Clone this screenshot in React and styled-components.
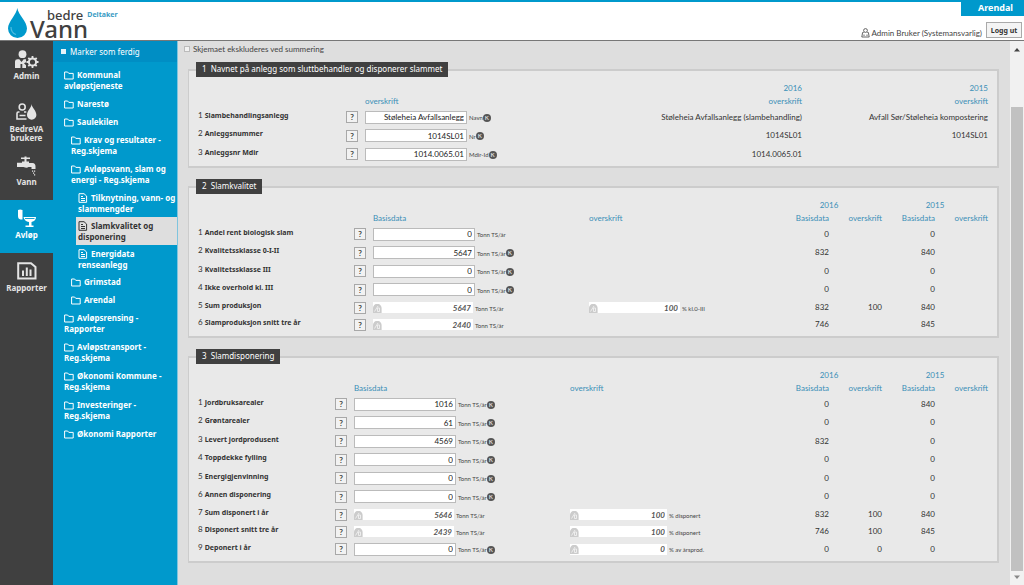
import React from 'react';
import styled, { createGlobalStyle } from 'styled-components';

const blue = '#0099cc';
const dark = '#404040';
const linkBlue = '#3a8fb7';
const heading = '"Noto Sans", "Open Sans", sans-serif';
const body = 'Lato, "Open Sans", sans-serif';

const GlobalStyle = createGlobalStyle`
    * {
        box-sizing: border-box;
    }
    body {
        margin: 0;
        background: #dedede;
        color: #333;
        font-family: ${body};
        font-size: 8px;
    }
    button, input {
        font-family: inherit;
    }
`

const Page = styled.div`
    display: flex;
    flex-direction: column;
    min-height: 100vh;
`

const Header = styled.header`
    display: flex;
    justify-content: space-between;
    height: 41px;
    background: #fff;
    border-top: 2px solid ${blue};
    border-bottom: 1px solid #777;
`

const Brand = styled.a`
    display: flex;
    padding: 6px 0 0 8px;
    color: ${dark};
    font-family: ${heading};
    text-decoration: none;
`

const BrandText = styled.span`
    display: grid;
    grid-template-rows: 12px 18px;
    margin-left: 3px;
`

const BrandTop = styled.span`
    display: flex;
    gap: 4px;
    margin-left: 17px;
    font-size: 13px;
    font-weight: 500;
    line-height: 14px;
`

const Role = styled.span`
    color: #3a9cc4;
    font-size: 7px;
    font-weight: bold;
`

const BrandName = styled.span`
    font-size: 24px;
    font-weight: 500;
    line-height: 18px;
`

const Account = styled.div`
    display: flex;
    flex-direction: column;
    align-items: flex-end;
`

const Owner = styled.div`
    width: 63px;
    height: 14px;
    padding-right: 11px;
    background: ${blue};
    color: #fff;
    font-family: ${heading};
    font-size: 9px;
    font-weight: bold;
    line-height: 11px;
    text-align: right;
`

const UserRow = styled.div`
    display: flex;
    align-items: center;
    gap: 4px;
    padding: 6px 2px 0 0;
`

const UserName = styled.span`
    display: flex;
    align-items: center;
    gap: 2px;
    padding-top: 5px;
    color: #444;
`

const LogoutButton = styled.button`
    width: 36px;
    height: 16px;
    padding: 0;
    background: #f4f4f4;
    border: 1px solid #aaa;
    color: #333;
    font-family: ${heading};
    font-size: 7px;
    font-weight: bold;
`

const Main = styled.div`
    display: flex;
    flex: 1;
`

const Modules = styled.nav`
    display: flex;
    flex-direction: column;
    flex: 0 0 53px;
    background: ${dark};
`

const ModuleLink = styled.a`
    display: flex;
    flex-direction: column;
    align-items: center;
    min-height: 53px;
    padding-top: 9px;
    background: ${props => props.$active ? blue : 'transparent'};
    color: ${props => props.$active ? '#fff' : '#e4e4e4'};
    font-family: ${heading};
    font-size: 8px;
    font-weight: bold;
    line-height: 9px;
    text-align: center;
    text-decoration: none;
`

const IconSlot = styled.span`
    height: 21px;
`

const Tree = styled.nav`
    flex: 0 0 125px;
    background: ${blue};
    border-right: 1px solid #7fc4de;
    color: #fff;
    font-family: ${heading};
`

const MarkDone = styled.label`
    display: flex;
    align-items: center;
    gap: 4px;
    height: 21px;
    margin-bottom: 4px;
    padding-left: 8px;
    background: #008ec4;
    font-size: 8px;

    input {
        appearance: none;
        width: 5px;
        height: 5px;
        margin: 0;
        background: #e6f3f9;
    }
`

const TreeList = styled.ul`
    margin: 0;
    padding: 0;
    list-style: none;
`

const TreeItem = styled.li`
    margin-left: ${props => props.$depth * 7 + (props.$depth === 2 ? 9 : 11)}px;
    padding: 3px 0 ${props => props.$depth === 2 ? 3 : 4}px ${props => props.$depth === 2 ? 2 : 0}px;
    background: ${props => props.$active ? '#dedede' : 'transparent'};
    color: ${props => props.$active ? '#333' : '#fff'};

    a {
        display: block;
        color: inherit;
        font-size: 8px;
        font-weight: bold;
        line-height: 11px;
        text-decoration: none;
    }

    svg {
        margin-right: 3px;
        vertical-align: -2px;
    }
`

const Content = styled.main`
    flex: 1;
    min-width: 0;
    padding: 3px 11px 0 10px;
`

const Exclude = styled.label`
    display: flex;
    align-items: center;
    gap: 3px;
    height: 10px;
    margin: 0 0 8px -4px;
    color: #444;

    input {
        appearance: none;
        width: 6px;
        height: 6px;
        margin: 0;
        background: #f2f2f2;
        border: 1px solid #bbb;
    }
`

const Section = styled.fieldset`
    min-width: 0;
    margin: 0 0 11px;
    padding: 5px 9px 3px 7px;
    background: #e9e9e9;
    border: 2px solid #ccc;
    border-left-width: 1px;
`

const Legend = styled.legend`
    height: 15px;
    padding: 0 6px;
    background: ${dark};
    color: #fff;
    font-family: ${heading};
    font-size: 8px;
    line-height: 14px;
    white-space: pre;
`

const Table = styled.table`
    width: 100%;
    border-collapse: collapse;
    table-layout: fixed;
    white-space: nowrap;
`

const HeadCell = styled.th`
    height: 13px;
    padding: 0;
    color: ${linkBlue};
    font-weight: normal;
    line-height: 13px;
    text-align: ${props => props.$align || 'left'};
`

const Row = styled.tr`
    height: ${props => props.$tall ? 19 : props.$calculated ? 17 : 18}px;
`

const Cell = styled.td`
    padding: 0;
    line-height: 11px;
    text-align: ${props => props.$align || 'left'};
`

const LabelCell = styled.th`
    padding: 0 0 4px 2px;
    font-weight: normal;
    line-height: 11px;
    text-align: left;

    label {
        font-family: ${heading};
        font-size: 7px;
        font-weight: bold;
    }
`

const HelpButton = styled.button`
    display: block;
    width: 12px;
    height: 12px;
    padding: 0;
    background: #f2f2f2;
    border: 1px solid #a8a8a8;
    color: #444;
    font-size: 8px;
    font-weight: bold;
    line-height: 10px;
`

const Field = styled.span`
    display: flex;
    position: relative;
    align-items: center;
    gap: 2px;
`

const ValueInput = styled.input`
    width: 102px;
    height: 13px;
    padding: 0 2px;
    background: #fff;
    border: 1px solid #bbb;
    color: #222;
    font-size: 8px;
    text-align: right;
`

const CalculatedInput = styled(ValueInput)`
    width: ${props => props.$width || 100}px;
    height: 11px;
    border: 0;
    color: #555;
    font-style: italic;
    font-weight: bold;
`

const CalcMark = styled.svg`
    position: absolute;
    top: 2px;
    left: 0;
`

const Unit = styled.span`
    display: flex;
    align-items: center;
    padding-top: 1px;
    color: #444;
    font-size: 6px;
`

const Comment = styled.button`
    width: 8px;
    height: 8px;
    padding: 0;
    background: #555;
    border: 0;
    border-radius: 50%;
    color: #ddd;
    font-size: 6px;
    font-weight: bold;
    line-height: 8px;
`

const ScrollTrack = styled.div`
    display: flex;
    flex-direction: column;
    flex: 0 0 14px;
    align-items: center;
    justify-content: space-between;
    padding: 6px 0 5px;
    background: #f1f1f1;
`

const ScrollThumb = styled.div`
    flex: 1;
    width: 12px;
    margin: 55px 0 4px;
    background: #c1c1c1;
`

const Folder = () => (
    <svg width="10" height="9" viewBox="0 0 10 9" fill="none" stroke="currentColor">
        <path d="M.6 8V1h3l1.2 1.4h4.4V8z" />
    </svg>
)

const Doc = () => (
    <svg width="10" height="10" viewBox="0 0 10 10" fill="none" stroke="currentColor">
        <path d="M1 .7h5L8.6 3v6.3H1zM3 3.500h2M3 5.500h4M3 7.500h4" />
    </svg>
)

const Drop = () => (
    <svg width="19" height="30" viewBox="0 0 19 30">
        <path d="M9.2 0C9 6 0 13.500 0 20.500a9.500 9.500 0 0 0 19 0C19 13.500 10.500 7 9.200 0z" fill={blue} />
        <path d="M3 19c0 4 2 6.500 5 7.500" fill="none" stroke="#4dbbe0" strokeWidth="1.200" />
    </svg>
)

const UserIcon = () => (
    <svg width="9" height="10" viewBox="0 0 9 10" fill="none" stroke="#555" strokeWidth="0.900">
        <circle cx="4.500" cy="2.500" r="1.900" />
        <path d="M2.700 4.500H1.600L.8 9h7.400l-.8-4.500H6.300M3 6.500v1.500M6 6.500v1.500" />
    </svg>
)

const AdminIcon = () => (
    <svg width="25" height="19" viewBox="0 0 25 19" fill="currentColor">
        <circle cx="8.500" cy="4.200" r="3.900" />
        <path d="M1 18V11.500Q1 9.200 3.500 9.200h1.800L7.500 12l2.200-2.800H12v3l-2 1 2 2V18H8.300v-4H6.500v4z" />
        <circle cx="18.500" cy="12" r="3.600" fill="none" stroke="currentColor" strokeWidth="2" />
        <path d="M18.500 6v2.500M18.500 15.500v2.500M12.500 12H15M22 12h2.500M14.300 7.800l1.700 1.700M21 14.500l1.700 1.700M14.300 16.200l1.700-1.700M21 9.500l1.700-1.700" stroke="currentColor" strokeWidth="1.800" />
    </svg>
)

const UsersIcon = () => (
    <svg width="21" height="18" viewBox="0 0 21 18" fill="none" stroke="currentColor" strokeWidth="1.600">
        <circle cx="6.200" cy="4" r="3" />
        <path d="M3.500 9H2.300Q1 9 1 10.500V16h9.500M8 9h2.300M3.500 12.500h6" />
        <path d="M15.500 1c0 4-4.500 6.500-4.500 11a4.700 4.700 0 0 0 9.400 0c0-4.500-4.400-7-4.900-11z" fill="currentColor" stroke="none" />
    </svg>
)

const TapIcon = () => (
    <svg width="21" height="20" viewBox="0 0 21 20" fill="currentColor">
        <path d="M5 1.500h3.500V.5h2v1h3.500V3h-3.500v2.500H13V7h3.500q3 0 3 3.500V13h-4v-2h-3q-1.500 1.500-5 0H1V6.800h5V5.500h2.500V3H5z" />
        <path d="M16 14.500h1.200v1.200H16zM18 14.500h1.200v1.200H18zM17 16.500h1.200v1.200H17zM18 18.300h1.200v1.200H18z" />
    </svg>
)

const ToiletIcon = () => (
    <svg width="20" height="19" viewBox="0 0 20 19" fill="currentColor">
        <path d="M1 1q2-1 4.500 0v9.500H3.500Q1 10 1 7zM6.500 8H19q0 4-4.500 5v3.500h2V18H8.500v-1.500H12V13Q7.500 12.500 6.500 8z" />
        <path d="M8 9.500h9.500" stroke={blue} strokeWidth="0.900" />
    </svg>
)

const ReportIcon = () => (
    <svg width="20" height="18" viewBox="0 0 20 18" fill="none" stroke="currentColor" strokeWidth="2">
        <path d="M1.200 1.200H14L18.500 5v11.500H1.200z" />
        <path d="M6 14V8.500M9.800 14V5.500M13.500 14V7.500" />
    </svg>
)

const modules = [
    { name: 'Admin', icon: <AdminIcon /> },
    { name: 'BedreVA brukere', icon: <UsersIcon /> },
    { name: 'Vann', icon: <TapIcon /> },
    { name: 'Avløp', icon: <ToiletIcon />, active: true },
    { name: 'Rapporter', icon: <ReportIcon /> },
]

const tree = [
    { depth: 0, text: 'Kommunal avløpstjeneste' },
    { depth: 0, text: 'Narestø' },
    { depth: 0, text: 'Saulekilen' },
    { depth: 1, text: 'Krav og resultater - Reg.skjema' },
    { depth: 1, text: 'Avløpsvann, slam og energi - Reg.skjema' },
    { depth: 2, text: 'Tilknytning, vann- og slammengder' },
    { depth: 2, text: 'Slamkvalitet og disponering', active: true },
    { depth: 2, text: 'Energidata renseanlegg' },
    { depth: 1, text: 'Grimstad' },
    { depth: 1, text: 'Arendal' },
    { depth: 0, text: 'Avløpsrensing - Rapporter' },
    { depth: 0, text: 'Avløpstransport - Reg.skjema' },
    { depth: 0, text: 'Økonomi Kommune - Reg.skjema' },
    { depth: 0, text: 'Investeringer - Reg.skjema' },
    { depth: 0, text: 'Økonomi Rapporter' },
]

const ton = 'Tonn TS/år'

const plants = [
    { label: 'Slambehandlingsanlegg', value: 'Støleheia Avfallsanlegg', unit: 'Navn', k: true, history: ['Støleheia Avfallsanlegg (slambehandling)', 'Avfall Sør/Støleheia kompostering'] },
    { label: 'Anleggsnummer', value: '1014SL01', unit: 'Nr', k: true, history: ['1014SL01', '1014SL01'] },
    { label: 'Anleggsnr Mdir', value: '1014.0065.01', unit: 'Mdir-Id', k: true, history: ['1014.0065.01', ''] },
]

const quality = [
    { label: 'Andel rent biologisk slam', value: '0', history: ['0', '', '0', ''] },
    { label: 'Kvalitetssklasse 0-I-II', value: '5647', k: true, history: ['832', '', '840', ''] },
    { label: 'Kvalitetssklasse III', value: '0', k: true, history: ['0', '', '0', ''] },
    { label: 'Ikke overhold kl. III', value: '0', k: true, history: ['0', '', '0', ''] },
    { label: 'Sum produksjon', value: '5647', calculated: true, share: '100', shareUnit: '% kl.0-III', history: ['832', '100', '840', ''] },
    { label: 'Slamproduksjon snitt tre år', value: '2440', calculated: true, history: ['746', '', '845', ''] },
]

const disposal = [
    { label: 'Jordbruksarealer', value: '1016', k: true, history: ['0', '', '840', ''] },
    { label: 'Grøntarealer', value: '61', k: true, history: ['0', '', '0', ''] },
    { label: 'Levert jordprodusent', value: '4569', k: true, history: ['832', '', '0', ''] },
    { label: 'Toppdekke fylling', value: '0', k: true, history: ['0', '', '0', ''] },
    { label: 'Energigjenvinning', value: '0', k: true, history: ['0', '', '0', ''] },
    { label: 'Annen disponering', value: '0', k: true, history: ['0', '', '0', ''] },
    { label: 'Sum disponert i år', value: '5646', calculated: true, share: '100', shareUnit: '% disponert', history: ['832', '100', '840', ''] },
    { label: 'Disponert snitt tre år', value: '2439', calculated: true, share: '100', shareUnit: '% disponert', history: ['746', '100', '845', ''] },
    { label: 'Deponert i år', value: '0', k: true, share: '0', shareUnit: '% av årsprod.', history: ['0', '0', '0', ''] },
]

const Calculated = ({ id, label, value, unit, width }) => (
    <Field>
        <CalculatedInput id={id} aria-label={label} defaultValue={value} readOnly $width={width} />
        <CalcMark width="9" height="9" viewBox="0 0 9 9">
            <path d="M0 9V4a4.300 4.300 0 0 1 8.600 0v5z" fill="#ccc" />
            <path d="M1.500 7.500L5 2M4.500 4h2v3.500h-2z" fill="none" stroke="#f5f5f5" strokeWidth="0.800" />
        </CalcMark>
        <Unit>{unit}</Unit>
    </Field>
)

const FormRow = ({ id, number, row, withShare, shareWidth }) => (
    <Row $tall={number % 2 === 0 && !row.calculated} $calculated={row.calculated}>
        <LabelCell scope="row">{number} <label htmlFor={id}>{row.label}</label></LabelCell>
        <Cell><HelpButton type="button" aria-label={'Hjelp ' + row.label}>?</HelpButton></Cell>
        <Cell>
            {row.calculated ? (
                <Calculated id={id} value={row.value} unit={ton} />
            ) : (
                <Field>
                    <ValueInput id={id} defaultValue={row.value} />
                    <Unit>
                        {row.unit || ton}
                        {row.k && <Comment type="button">K</Comment>}
                    </Unit>
                </Field>
            )}
        </Cell>
        {withShare && (
            <Cell>
                {row.share && <Calculated label={row.label + ' %'} value={row.share} unit={row.shareUnit} width={shareWidth} />}
            </Cell>
        )}
        {row.history.map((value, i) => <Cell key={i} $align="right">{value}</Cell>)}
    </Row>
)

const NameSection = () => (
    <Section>
        <Legend>1  Navnet på anlegg som sluttbehandler og disponerer slammet</Legend>
        <Table>
            <colgroup>
                <col width="150" />
                <col width="19" />
                <col width="216" />
                <col />
                <col width="186" />
            </colgroup>
            <thead>
                <tr>
                    <HeadCell colSpan="3" />
                    <HeadCell $align="right">2016</HeadCell>
                    <HeadCell $align="right">2015</HeadCell>
                </tr>
                <tr>
                    <HeadCell colSpan="2" />
                    <HeadCell>overskrift</HeadCell>
                    <HeadCell $align="right">overskrift</HeadCell>
                    <HeadCell $align="right">overskrift</HeadCell>
                </tr>
            </thead>
            <tbody>
                {plants.map((row, i) => (
                    <FormRow key={row.label} id={'plant' + i} number={i + 1} row={row} />
                ))}
            </tbody>
        </Table>
    </Section>
)

const DataSection = ({ name, title, rows, labelWidth, shareWidth }) => (
    <Section>
        <Legend>{title}</Legend>
        <Table>
            <colgroup>
                <col width={labelWidth} />
                <col width="19" />
                <col width="216" />
                <col />
                <col width="53" />
                <col width="53" />
                <col width="53" />
                <col width="53" />
            </colgroup>
            <thead>
                <tr>
                    <HeadCell colSpan="4" />
                    <HeadCell colSpan="2" $align="center">2016</HeadCell>
                    <HeadCell colSpan="2" $align="center">2015</HeadCell>
                </tr>
                <tr>
                    <HeadCell colSpan="2" />
                    <HeadCell>Basisdata</HeadCell>
                    <HeadCell>overskrift</HeadCell>
                    <HeadCell $align="right">Basisdata</HeadCell>
                    <HeadCell $align="right">overskrift</HeadCell>
                    <HeadCell $align="right">Basisdata</HeadCell>
                    <HeadCell $align="right">overskrift</HeadCell>
                </tr>
            </thead>
            <tbody>
                {rows.map((row, i) => (
                    <FormRow key={row.label} id={name + i} number={i + 1} row={row} withShare shareWidth={shareWidth} />
                ))}
            </tbody>
        </Table>
    </Section>
)

export default class App extends React.Component {

    render() {
      return (
        <Page>
            <GlobalStyle />
            <Header>
                <Brand href="#">
                    <Drop />
                    <BrandText>
                        <BrandTop>bedre <Role>Deltaker</Role></BrandTop>
                        <BrandName>Vann</BrandName>
                    </BrandText>
                </Brand>
                <Account>
                    <Owner>Arendal</Owner>
                    <UserRow>
                        <UserName><UserIcon /> Admin Bruker (Systemansvarlig)</UserName>
                        <LogoutButton type="button">Logg ut</LogoutButton>
                    </UserRow>
                </Account>
            </Header>
            <Main>
                <Modules>
                    {modules.map(item => (
                        <ModuleLink key={item.name} href="#" $active={item.active}>
                            <IconSlot>{item.icon}</IconSlot>
                            {item.name}
                        </ModuleLink>
                    ))}
                </Modules>
                <Tree>
                    <MarkDone><input type="checkbox" /> Marker som ferdig</MarkDone>
                    <TreeList>
                        {tree.map(item => (
                            <TreeItem key={item.text} $depth={item.depth} $active={item.active}>
                                <a href="#">{item.depth === 2 ? <Doc /> : <Folder />}{item.text}</a>
                            </TreeItem>
                        ))}
                    </TreeList>
                </Tree>
                <Content>
                    <Exclude><input type="checkbox" /> Skjemaet ekskluderes ved summering</Exclude>
                    <NameSection />
                    <DataSection name="quality" title="2  Slamkvalitet" rows={quality} labelWidth="158" shareWidth={91} />
                    <DataSection name="disposal" title="3  Slamdisponering" rows={disposal} labelWidth="139" shareWidth={97} />
                </Content>
                <ScrollTrack>
                    <svg width="8" height="5" viewBox="0 0 8 5"><path d="M1 4.500L4 1l3 3.500z" fill="#444" /></svg>
                    <ScrollThumb />
                    <svg width="8" height="5" viewBox="0 0 8 5"><path d="M1 .5L4 4 7 .5z" fill="#888" /></svg>
                </ScrollTrack>
            </Main>
        </Page>
      )
    }
  }
